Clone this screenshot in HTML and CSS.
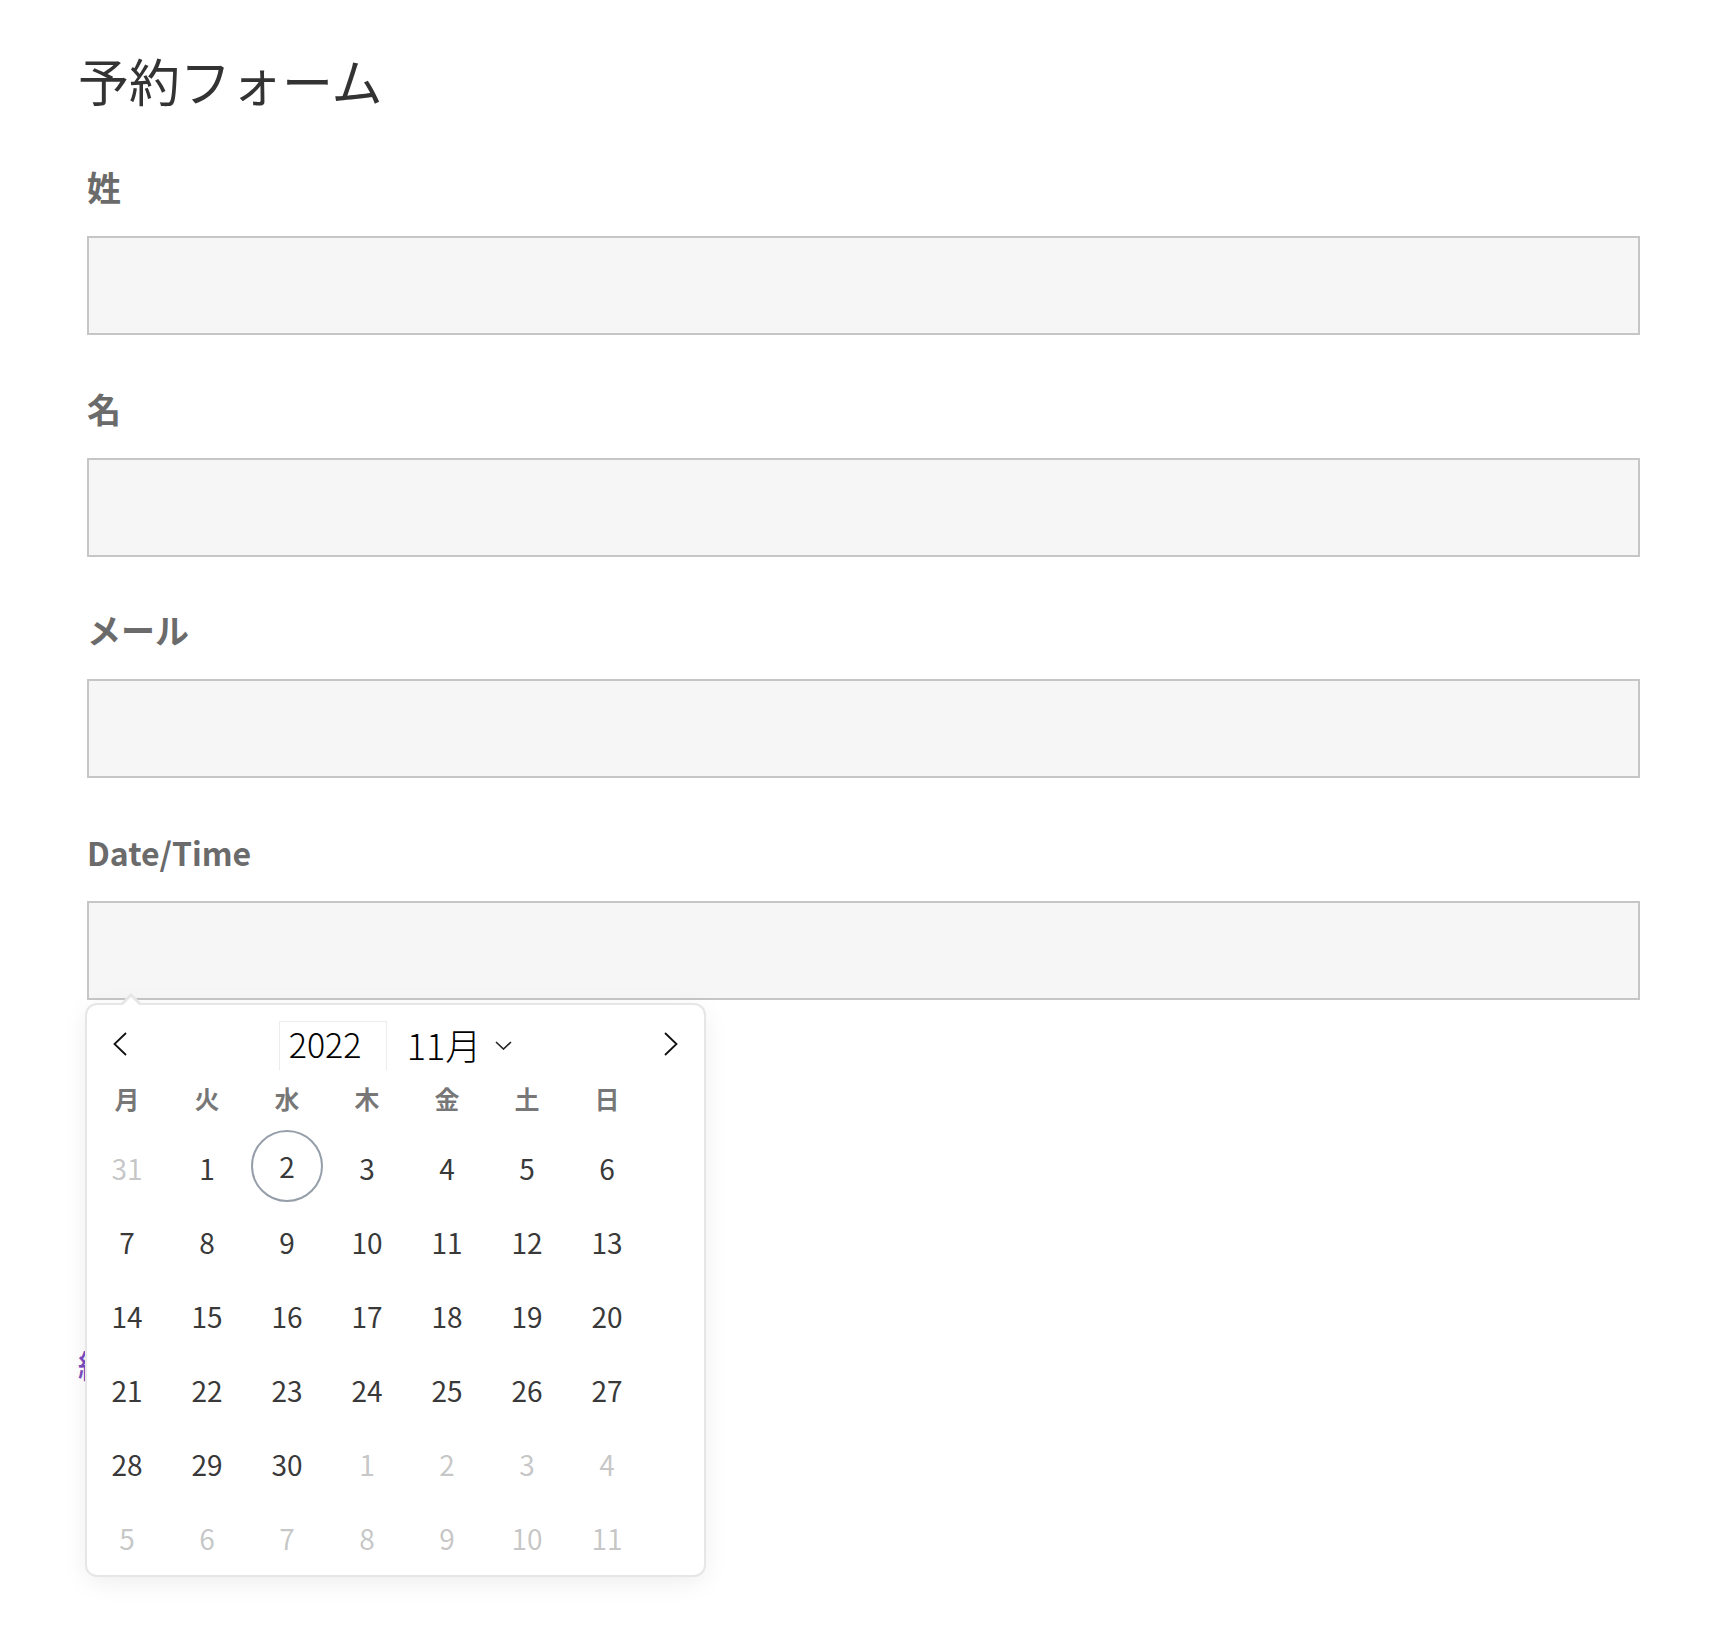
FILE: index.html
```html
<!DOCTYPE html>
<html lang="ja">
<head>
<meta charset="utf-8">
<title>予約フォーム</title>
<link rel="stylesheet" href="styles.css">
</head>
<body>
<main class="page">
  <h1 class="title">予約フォーム</h1>
  <form class="fields">
    <div class="field">
      <label class="label">姓</label>
      <input class="input" type="text">
    </div>
    <div class="field">
      <label class="label">名</label>
      <input class="input" type="text">
    </div>
    <div class="field">
      <label class="label">メール</label>
      <input class="input" type="text">
    </div>
    <div class="field field-date">
      <label class="label label-latin">Date/Time</label>
      <input class="input" type="text">
      <div class="calendar">
        <div class="cal-head">
          <span class="nav"><svg width="14" height="24" viewBox="0 0 14 24"><polyline points="13,1 1.5,12 13,23" fill="none" stroke="#111" stroke-width="1.8"/></svg></span>
          <div class="current">
            <span class="year">2022</span>
            <span class="month">11月</span>
            <svg class="chev" width="17" height="9" viewBox="0 0 17 9"><polyline points="1,1 8.5,8 16,1" fill="none" stroke="#222" stroke-width="1.6"/></svg>
          </div>
          <span class="nav"><svg width="14" height="24" viewBox="0 0 14 24"><polyline points="1,1 12.5,12 1,23" fill="none" stroke="#111" stroke-width="1.8"/></svg></span>
        </div>
        <div class="weekdays">
          <span>月</span><span>火</span><span>水</span><span>木</span><span>金</span><span>土</span><span>日</span>
        </div>
        <div class="days">
          <div class="day muted"><span>31</span></div>
          <div class="day"><span>1</span></div>
          <div class="day today"><span>2</span></div>
          <div class="day"><span>3</span></div>
          <div class="day"><span>4</span></div>
          <div class="day"><span>5</span></div>
          <div class="day"><span>6</span></div>
          <div class="day"><span>7</span></div>
          <div class="day"><span>8</span></div>
          <div class="day"><span>9</span></div>
          <div class="day"><span>10</span></div>
          <div class="day"><span>11</span></div>
          <div class="day"><span>12</span></div>
          <div class="day"><span>13</span></div>
          <div class="day"><span>14</span></div>
          <div class="day"><span>15</span></div>
          <div class="day"><span>16</span></div>
          <div class="day"><span>17</span></div>
          <div class="day"><span>18</span></div>
          <div class="day"><span>19</span></div>
          <div class="day"><span>20</span></div>
          <div class="day"><span>21</span></div>
          <div class="day"><span>22</span></div>
          <div class="day"><span>23</span></div>
          <div class="day"><span>24</span></div>
          <div class="day"><span>25</span></div>
          <div class="day"><span>26</span></div>
          <div class="day"><span>27</span></div>
          <div class="day"><span>28</span></div>
          <div class="day"><span>29</span></div>
          <div class="day"><span>30</span></div>
          <div class="day muted"><span>1</span></div>
          <div class="day muted"><span>2</span></div>
          <div class="day muted"><span>3</span></div>
          <div class="day muted"><span>4</span></div>
          <div class="day muted"><span>5</span></div>
          <div class="day muted"><span>6</span></div>
          <div class="day muted"><span>7</span></div>
          <div class="day muted"><span>8</span></div>
          <div class="day muted"><span>9</span></div>
          <div class="day muted"><span>10</span></div>
          <div class="day muted"><span>11</span></div>
        </div>
      </div>
    </div>
  </form>
  <a class="submit" href="#">続ける</a>
</main>
</body>
</html>
```
FILE: styles.css
```css
html, body {
  margin: 0;
  background: #fff;
}
body {
  font-family: "Noto Sans CJK JP", "Noto Sans", sans-serif;
}
.page {
  box-sizing: border-box;
  min-height: 1650px;
  padding: 50px 84px 60px 78px;
}
.title {
  margin: 0 0 52px;
  font-size: 51px;
  line-height: 60px;
  font-weight: 400;
  color: #333;
}
.fields {
  display: flow-root;
  padding-left: 9px;
}
.field {
  margin-bottom: 48.7px;
}
.field-date {
  position: relative;
}
.label {
  display: block;
  margin-bottom: 24px;
  font-size: 34px;
  line-height: 50px;
  font-weight: 700;
  color: #6b6b6b;
}
.label-latin {
  font-size: 32px;
}
.input {
  display: block;
  box-sizing: border-box;
  width: 100%;
  height: 99px;
  margin: 0;
  padding: 0 20px;
  background: #f6f6f6;
  border: 2px solid #c6c6c6;
  border-radius: 0;
  font: inherit;
  outline: none;
}
.submit {
  display: block;
  margin-top: 295px;
  font-size: 32px;
  line-height: 40px;
  font-weight: 500;
  color: #7b4bc2;
  text-decoration: none;
}
.calendar {
  position: absolute;
  top: calc(100% + 5px);
  left: 0;
  z-index: 10;
  width: 617px;
  background: #fff;
  border-radius: 10px;
  box-shadow: 0 0 0 2px #e6e6e6, 0 6px 26px rgba(0, 0, 0, 0.08);
}
.calendar::before,
.calendar::after {
  content: "";
  position: absolute;
  left: 44px;
  bottom: 100%;
  width: 0;
  height: 0;
  border: solid transparent;
}
.calendar::before {
  margin-left: -10px;
  border-width: 10px;
  border-bottom-color: #e6e6e6;
  margin-bottom: 2px;
}
.calendar::after {
  margin-left: -8px;
  border-width: 8px;
  border-bottom-color: #fff;
  margin-bottom: 0;
}
.cal-head {
  display: flex;
  align-items: center;
  justify-content: space-between;
  height: 78px;
  padding: 0 26px 0 26px;
}
.nav {
  display: flex;
  width: 14px;
  height: 24px;
}
.current {
  display: flex;
  align-items: center;
  color: #000;
  font-size: 36px;
  font-weight: 300;
}
.year {
  box-sizing: border-box;
  width: 108px;
  height: 50px;
  padding-left: 9px;
  line-height: 44px;
  border: 1px solid #ececec;
  border-bottom-color: transparent;
  margin-top: 4px;
  font-size: 34px;
}
.month {
  margin-left: 20px;
  line-height: 48px;
}
.chev {
  margin-left: 14px;
  margin-top: 2px;
}
.weekdays {
  display: grid;
  grid-template-columns: repeat(7, 80px);
  height: 32px;
  margin-bottom: 16px;
}
.weekdays span {
  text-align: center;
  font-size: 25px;
  line-height: 30px;
  font-weight: 700;
  color: rgba(0, 0, 0, 0.54);
}
.days {
  display: grid;
  grid-template-columns: repeat(7, 80px);
  grid-auto-rows: 74px;
}
.day {
  display: flex;
  align-items: center;
  justify-content: center;
  font-size: 28px;
  line-height: 36px;
  color: #393939;
}
.day.muted {
  color: rgba(57, 57, 57, 0.3);
}
.day.today span {
  box-sizing: border-box;
  display: flex;
  align-items: center;
  justify-content: center;
  width: 72px;
  height: 72px;
  margin-bottom: 4px;
  border: 2px solid #959ea9;
  border-radius: 50%;
}
```
